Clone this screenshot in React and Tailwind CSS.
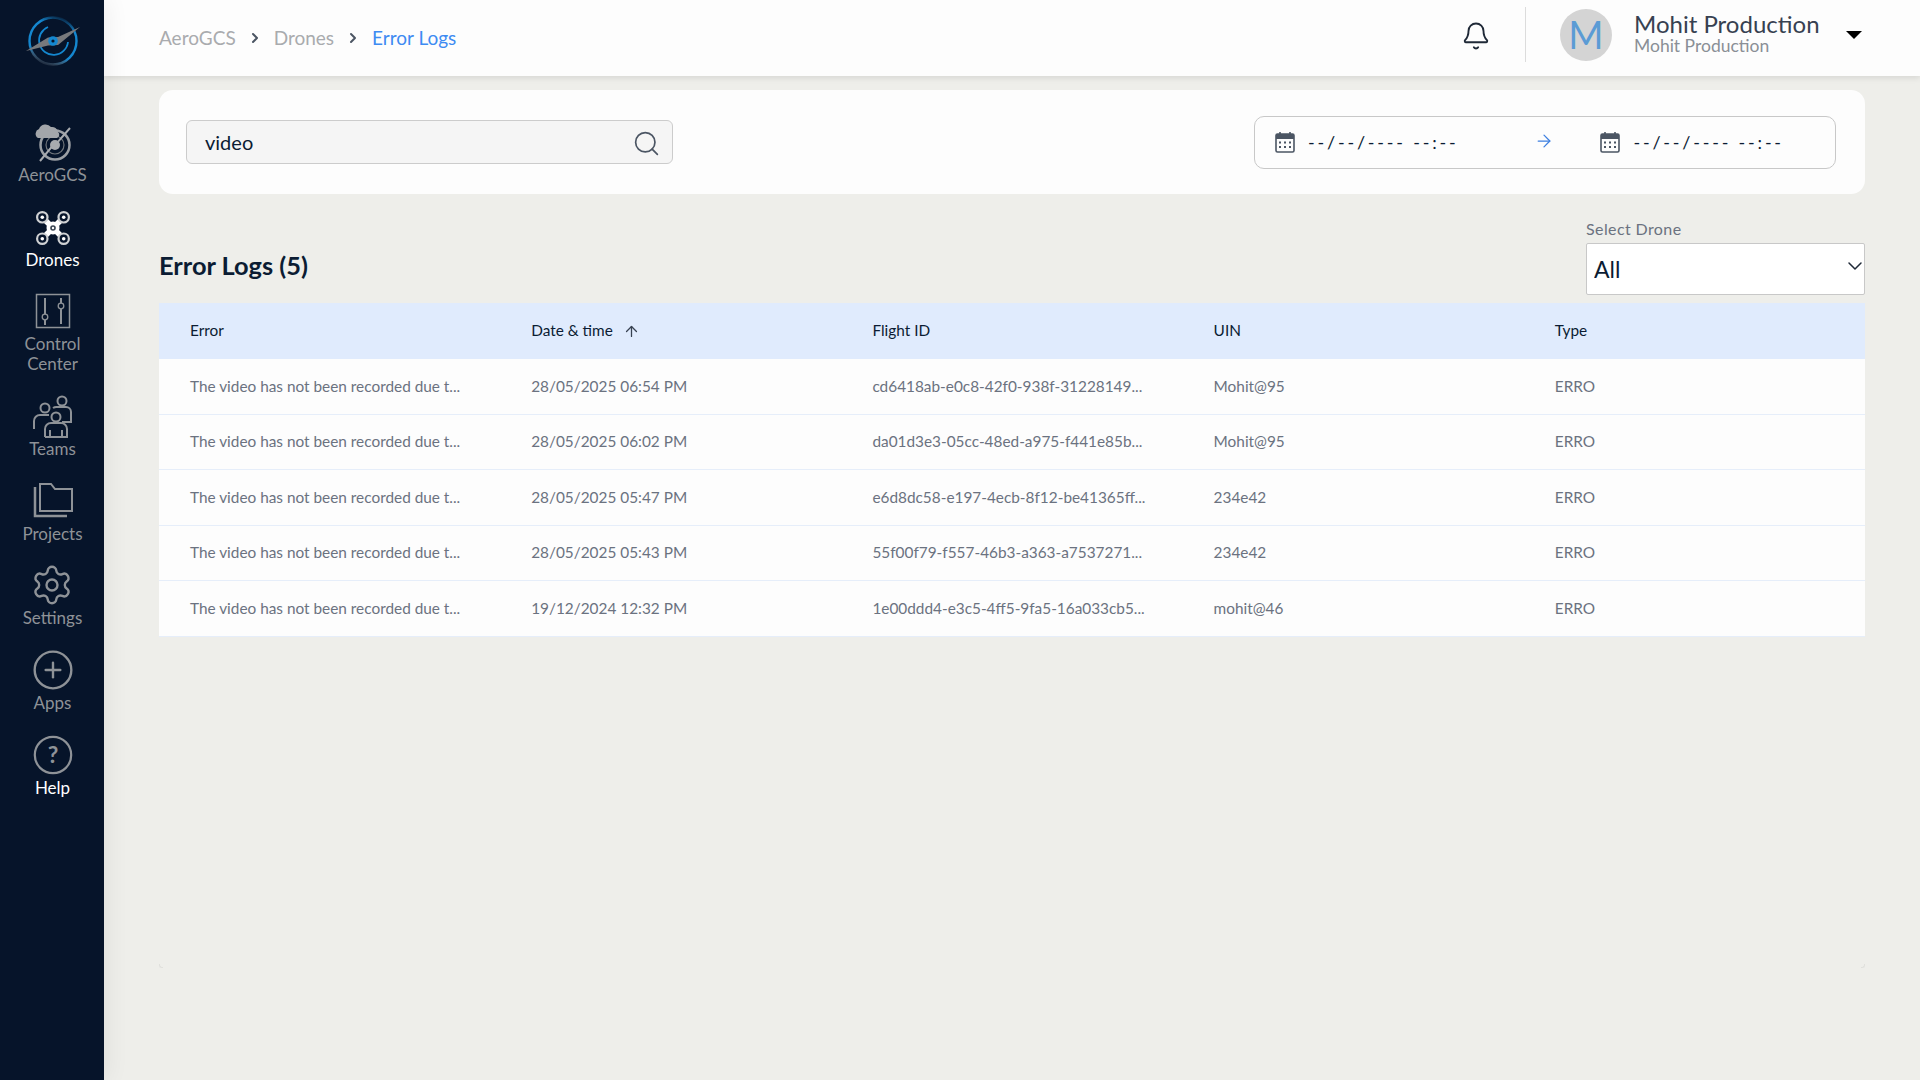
import { ArrowRight, ArrowUp, Bell, ChevronDown, ChevronRight, CirclePlus, Search, Settings } from "lucide-react"

const rows = [
  { date: "28/05/2025 06:54 PM", flight: "cd6418ab-e0c8-42f0-938f-31228149...", uin: "Mohit@95" },
  { date: "28/05/2025 06:02 PM", flight: "da01d3e3-05cc-48ed-a975-f441e85b...", uin: "Mohit@95" },
  { date: "28/05/2025 05:47 PM", flight: "e6d8dc58-e197-4ecb-8f12-be41365ff...", uin: "234e42" },
  { date: "28/05/2025 05:43 PM", flight: "55f00f79-f557-46b3-a363-a7537271...", uin: "234e42" },
  { date: "19/12/2024 12:32 PM", flight: "1e00ddd4-e3c5-4ff5-9fa5-16a033cb5...", uin: "mohit@46" },
]

const Logo = () => (
  <svg width="54" height="50" viewBox="0 0 54 50" fill="none">
    <defs>
      <linearGradient id="ringFade" x1="0.72" y1="0.02" x2="0.38" y2="1">
        <stop offset="0" stopColor="#1487cf" stopOpacity="0.15" />
        <stop offset="0.2" stopColor="#1487cf" />
        <stop offset="0.75" stopColor="#1487cf" />
        <stop offset="1" stopColor="#8a9aa6" stopOpacity="0.2" />
      </linearGradient>
    </defs>
    <circle cx="27" cy="25" r="23.500" stroke="url(#ringFade)" strokeWidth="2.400" />
    <path d="M22 11a14.500 14.500 0 1 0 20 15" stroke="#1487cf" strokeWidth="1.800" />
    <path d="M0 35 L22 21.500 L32 21 L54 11 L32 29 L22 29.500 Z" fill="#77797c" />
    <circle cx="27" cy="25" r="4.800" fill="#1487cf" />
    <circle cx="27" cy="25" r="1.600" fill="#06142a" />
  </svg>
)

const AeroIcon = () => (
  <svg width="46" height="46" viewBox="0 0 46 46" fill="none">
    <circle cx="25" cy="26" r="14.500" stroke="#9b9fa4" strokeWidth="2.500" />
    <circle cx="25" cy="26" r="9" stroke="#6f747a" strokeWidth="1.200" />
    <path d="M10 42 L24 25 L27 24 L40 9" stroke="#a8abaf" strokeWidth="2" />
    <circle cx="25" cy="26" r="5" fill="#a8abaf" />
    <path d="M8 19a5 5 0 0 1 1-9 7 7 0 0 1 12-2 6 6 0 0 1 7 5 3.500 3.500 0 0 1-1 6Z" fill="#a3a6aa" />
  </svg>
)

const DroneIcon = () => (
  <svg width="46" height="46" viewBox="0 0 46 46" fill="none" stroke="#fff" className="mt-[3px]">
    <path d="M12 12 L34 34 M34 12 L12 34" strokeWidth="5.500" />
    <circle cx="23" cy="23" r="6.500" fill="#fff" stroke="none" />
    <circle cx="23" cy="23" r="2.800" fill="#3a4552" stroke="none" />
    <circle cx="23" cy="23" r="1.200" fill="#fff" stroke="none" />
    {[[12.300, 12.300], [33.700, 12.300], [12.300, 33.700], [33.700, 33.700]].map(([x, y]) => (
      <g key={`${x}-${y}`}>
        <circle cx={x} cy={y} r="5.200" fill="#06142a" stroke="#cfd1d3" strokeWidth="2.200" />
        <circle cx={x} cy={y} r="1.800" fill="#fff" stroke="none" />
      </g>
    ))}
  </svg>
)

const ControlIcon = () => (
  <svg width="46" height="46" viewBox="0 0 46 46" fill="none" stroke="#8e9297">
    <rect x="6.500" y="6.500" width="33" height="33" strokeWidth="1.500" />
    <path d="M15 10 V26 M15 32 V37 M31 10 V15 M31 21 V36" strokeWidth="2" />
    <circle cx="15" cy="29" r="2.800" strokeWidth="1.300" />
    <circle cx="31" cy="18" r="2.800" strokeWidth="1.300" />
  </svg>
)

const TeamsIcon = () => (
  <svg width="46" height="46" viewBox="0 0 46 46" fill="none" stroke="#8e9297" strokeWidth="2">
    <circle cx="16" cy="15" r="4.500" />
    <circle cx="33" cy="8" r="4.500" />
    <circle cx="27" cy="24" r="4.500" />
    <path d="M5 36 V28 a6 6 0 0 1 6-6 H20" />
    <path d="M24 15 a6 6 0 0 1 4-1 H37 a5 5 0 0 1 5 5 V29 H33" />
    <path d="M16 44 V36 a6 6 0 0 1 6-6 H32 a6 6 0 0 1 6 6 V44 H16 M21 44 V37 M33 44 V37" />
  </svg>
)

const ProjectsIcon = () => (
  <svg width="46" height="46" viewBox="0 0 46 46" fill="none" stroke="#8e9297" strokeWidth="2">
    <path d="M10 6 H21 L25 11 H42 V33 H10 Z" />
    <path d="M5 9 V38 H37" strokeWidth="2.500" />
  </svg>
)

const HelpIcon = () => (
  <svg width="44" height="44" viewBox="0 0 44 44" fill="none">
    <circle cx="22" cy="22" r="18.200" stroke="#8e9297" strokeWidth="2.200" />
    <text x="22" y="30" textAnchor="middle" fontFamily="Lato, sans-serif" fontWeight="700" fontSize="23" fill="#8e9297">?</text>
  </svg>
)

const CalendarIcon = () => (
  <svg width="20" height="22" viewBox="0 0 20 22" fill="none">
    <path d="M5 1 V4 M15 1 V4" stroke="#4b5563" strokeWidth="1.600" />
    <rect x="1" y="3" width="18" height="18" rx="1.500" stroke="#4b5563" strokeWidth="1.600" />
    <rect x="1" y="3" width="18" height="5" fill="#4b5563" />
    {[5, 10, 15].map((x) => (
      <g key={x} fill="#4b5563">
        <rect x={x - 1} y="10.500" width="2" height="2" />
        <rect x={x - 1} y="15" width="2" height="2" />
      </g>
    ))}
  </svg>
)

const NavItem = ({ icon, label, active }) => (
  <div className="flex flex-col items-center mb-[18.700px]">
    <div className="h-[46px] flex items-center justify-center">{icon}</div>
    <span className={`text-[17px] leading-[20px] text-center ${active ? "text-white" : "text-[#8e9297]"}`}>{label}</span>
  </div>
)

const Crumb = ({ children, active }) => (
  <span className={`text-[19px] ${active ? "text-[#3d8bf2]" : "text-[#a9abae]"}`}>{children}</span>
)

const DateField = () => (
  <div className="flex items-center gap-[13px]">
    <CalendarIcon />
    <span className="text-[18px] tracking-[2.800px] text-[#0b1c33]">--/--/---- --:--</span>
  </div>
)

export default function App() {
  return (
    <div className="flex h-screen w-full overflow-hidden bg-[#eeeeea] font-['Lato',sans-serif]">
      {/* Sidebar */}
      <aside className="relative z-10 w-[104px] shrink-0 bg-[#06142a] flex flex-col items-center pl-[1px] pt-[16px] shadow-[4px_0_22px_rgba(0,0,0,0.06)]">
        <div className="h-[50px] mb-[53px]">
          <Logo />
        </div>
        <NavItem icon={<AeroIcon />} label="AeroGCS" />
        <NavItem icon={<DroneIcon />} label="Drones" active />
        <NavItem icon={<ControlIcon />} label={<>Control<br />Center</>} />
        <NavItem icon={<TeamsIcon />} label="Teams" />
        <NavItem icon={<ProjectsIcon />} label="Projects" />
        <NavItem icon={<Settings size={44} strokeWidth={1.3} className="text-[#8e9297]" />} label="Settings" />
        <NavItem icon={<CirclePlus size={44} strokeWidth={1.3} className="text-[#8e9297]" />} label="Apps" />
        <NavItem icon={<HelpIcon />} label="Help" active />
      </aside>

      <main className="flex-1 min-w-0 flex flex-col">
        {/* Header */}
        <header className="relative z-[5] h-[76px] shrink-0 bg-[#fdfdfd] shadow-[0_2px_6px_rgba(0,0,0,0.1)] flex items-center pl-[55px] pr-[58px]">
          <nav className="flex items-center gap-[11px]">
            <Crumb>AeroGCS</Crumb>
            <ChevronRight size={16} strokeWidth={3} className="text-[#4b5563]" />
            <Crumb>Drones</Crumb>
            <ChevronRight size={16} strokeWidth={3} className="text-[#4b5563]" />
            <Crumb active>Error Logs</Crumb>
          </nav>
          <div className="ml-auto flex items-center mb-[7px]">
            <Bell size={30} strokeWidth={1.5} className="text-[#1f2937] mr-[34px] mt-[2px]" />
            <div className="w-px h-[55px] bg-[#dcdcdc] mr-[34px]" />
            <div className="w-[52px] h-[52px] rounded-full bg-[#d4d4d4] flex items-center justify-center text-[38px] text-[#5b9bd5] mr-[22px]">M</div>
            <div className="flex flex-col w-[212px] mb-[4px]">
              <span className="text-[24px] leading-[26px] text-[#374151]">Mohit Production</span>
              <span className="text-[17.500px] leading-[18px] text-[#8a8f96]">Mohit Production</span>
            </div>
            <div className="w-0 h-0 border-x-[8px] border-x-transparent border-t-[8px] border-t-black" />
          </div>
        </header>

        {/* Content */}
        <div className="flex-1 flex flex-col px-[55px] pt-[14px] pb-[112px]">
          <div className="h-[104px] shrink-0 bg-[#fdfdfd] rounded-[14px] flex items-center justify-between pl-[27px] pr-[29px]">
            <div className="w-[487px] h-[44px] bg-[#f5f5f5] border border-[#cccccc] rounded-[6px] flex items-center justify-between pl-[18px] pr-[11px]">
              <span className="text-[20px] text-[#0b1c33]">video</span>
              <Search size={29} strokeWidth={1.4} className="text-[#4b5563] mt-[2px]" />
            </div>
            <div className="w-[582px] h-[53px] border border-[#c8c8c8] rounded-[10px] flex items-center pl-[20px]">
              <DateField />
              <ArrowRight size={20} strokeWidth={1.5} className="text-[#3d7fe0] ml-[76px] mr-[46px] mb-[2px]" />
              <DateField />
            </div>
          </div>

          <div className="flex justify-between mt-[25px] mb-[8px]">
            <h1 className="self-end mb-[15px] text-[25.400px] leading-[30px] font-bold text-[#0b1c33]">Error Logs (5)</h1>
            <div className="w-[279px] flex flex-col">
              <label className="text-[16px] leading-[20px] tracking-[0.400px] text-[#6b7280] mb-[4px]">Select Drone</label>
              <div className="relative">
                <select className="w-full h-[52px] appearance-none bg-white border border-[#c8c8c8] rounded-[2px] pl-[7px] text-[23px] text-[#0b1c33] outline-none">
                  <option>All</option>
                </select>
                <ChevronDown size={24} strokeWidth={1.5} className="absolute right-[-2px] top-[11px] text-[#1f2937] pointer-events-none" />
              </div>
            </div>
          </div>

          {/* Table */}
          <div className="flex-1 flex flex-col">
            <div className="grid grid-cols-5 h-[56px] shrink-0 items-center bg-[#e0ebfd] text-[15.360px] text-[#0b1c33]">
              <span className="pl-[31px]">Error</span>
              <span className="pl-[31px] flex items-center gap-[10px]">Date &amp; time <ArrowUp size={17} strokeWidth={1.8} className="text-[#374151] mt-[1px]" /></span>
              <span className="pl-[31px]">Flight ID</span>
              <span className="pl-[31px]">UIN</span>
              <span className="pl-[31px]">Type</span>
            </div>
            {rows.map((row, index) => (
              <div key={index} className="grid grid-cols-5 h-[55.500px] shrink-0 items-center bg-[#fdfdfd] border-b border-[#e6eefa] text-[15.360px] text-[#6b7280]">
                <span className="pl-[31px]">The video has not been recorded due t...</span>
                <span className="pl-[31px]">{row.date}</span>
                <span className="pl-[31px]">{row.flight}</span>
                <span className="pl-[31px]">{row.uin}</span>
                <span className="pl-[31px]">ERRO</span>
              </div>
            ))}
            <div className="mt-auto flex justify-between">
              <div className="w-[4px] h-[4px] border-l border-b border-[#e0e0dc] rounded-bl-[3px]" />
              <div className="w-[4px] h-[4px] border-r border-b border-[#e0e0dc] rounded-br-[3px]" />
            </div>
          </div>
        </div>
      </main>
    </div>
  )
}
